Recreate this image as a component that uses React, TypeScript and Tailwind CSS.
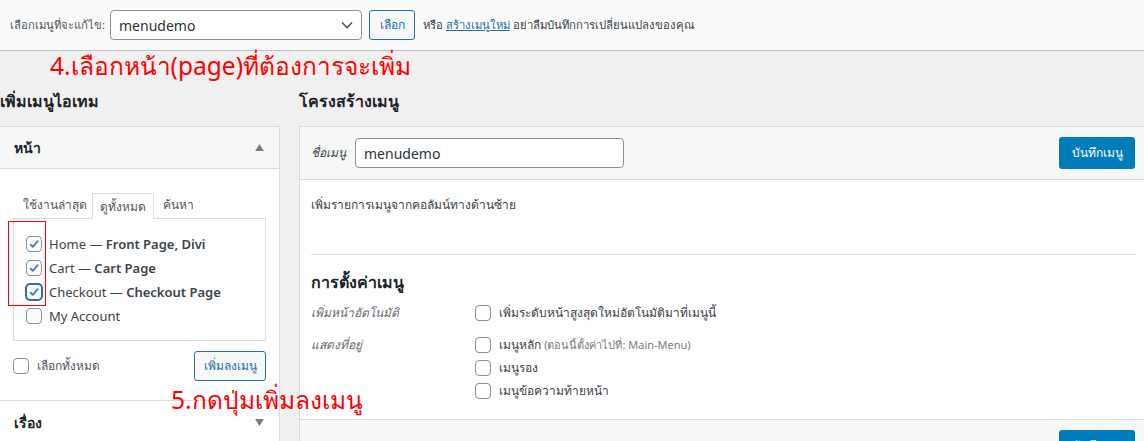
import React from 'react';

function Check({ checked = false, focus = false }: { checked?: boolean; focus?: boolean }) {
  return (
    <span
      className={`inline-flex h-4 w-4 shrink-0 items-center justify-center rounded-[4px] border bg-white ${
        focus ? 'border-[#2271b1] shadow-[0_0_0_1px_#2271b1]' : 'border-[#8c8f94]'
      }`}
    >
      {checked && (
        <svg viewBox="0 0 20 20" className="h-[18px] w-[18px]">
          <path d="M4.5 10.2 L8.3 14 L15.8 5.2" fill="none" stroke="#3582c4" strokeWidth="2.6" strokeLinejoin="round" />
        </svg>
      )}
    </span>
  );
}

function Triangle({ up = false }: { up?: boolean }) {
  return (
    <svg viewBox="0 0 10 8" className="h-[7px] w-[9px]">
      <path d={up ? 'M5 0 L10 8 L0 8 Z' : 'M0 0 L10 0 L5 8 Z'} fill="#787c82" />
    </svg>
  );
}

const pages = [
  { name: 'Home', state: 'Front Page, Divi' },
  { name: 'Cart', state: 'Cart Page' },
  { name: 'Checkout', state: 'Checkout Page', focus: true },
];

export default function App() {
  return (
    <div
      className="relative h-[441px] w-[1144px] overflow-hidden bg-[#f0f0f1] text-[13px] text-[#3c434a]"
      style={{ fontFamily: '"Noto Sans", "Liberation Sans", Tahoma, sans-serif' }}
    >
      {/* top bar */}
      <div className="flex h-[51px] items-center border-b border-[#c3c4c7] bg-[#fafafa] pl-[10px]">
        <span className="w-[92px] whitespace-nowrap text-[11.3px] text-[#50575e]">เลือกเมนูที่จะแก้ไข:</span>
        <div className="ml-[8px] flex h-[30px] w-[252px] items-center justify-between rounded-[4px] border border-[#8c8f94] bg-white pl-[8px] pr-[8px]">
          <span className="text-[14px] text-[#2c3338]">menudemo</span>
          <svg viewBox="0 0 12 8" className="h-[8px] w-[12px]">
            <path d="M1 1.5 L6 6.5 L11 1.5" fill="none" stroke="#50575e" strokeWidth="1.6" />
          </svg>
        </div>
        <button className="ml-[7px] h-[30px] w-[46px] rounded-[3px] border border-[#2271b1] bg-[#f6f7f7] text-[12px] text-[#2271b1]">
          เลือก
        </button>
        <span className="ml-[8px] text-[11.3px] text-[#3c434a]">
          หรือ <span className="text-[#2271b1] underline">สร้างเมนูใหม่</span> อย่าลืมบันทึกการเปลี่ยนแปลงของคุณ
        </span>
      </div>

      {/* columns */}
      <div className="flex gap-[19px]">
        {/* left column */}
        <div className="w-[280px] shrink-0">
          <div className="flex h-[75px] items-start pt-[38px]">
            <h2 className="text-[16px] font-semibold leading-[24px] text-[#1d2327]">เพิ่มเมนูไอเทม</h2>
          </div>
          <div className="border border-l-0 border-[#dcdcde] bg-white">
            <div className="flex h-[42px] items-center justify-between border-b border-[#dcdcde] bg-[#f6f7f7] pl-[14px] pr-[15px]">
              <span className="text-[14px] font-semibold text-[#1d2327]">หน้า</span>
              <Triangle up />
            </div>
            <div className="px-[13px] pb-[19px] pt-[24px]">
              <div className="flex items-end text-[12px] text-[#50575e]">
                <span className="pb-[4px] pl-[10px] pr-[5px]">ใช้งานล่าสุด</span>
                <span className="relative -mb-px h-[26px] border border-b-0 border-[#dcdcde] bg-white px-[7px] pt-[4px]">ดูทั้งหมด</span>
                <span className="px-[9px] pb-[4px]">ค้นหา</span>
              </div>
              <div className="flex h-[123px] flex-col gap-[8px] border border-[#dcdcde] bg-white pl-[12px] pt-[17px]">
                {pages.map((p) => (
                  <label key={p.name} className="flex h-[16px] items-center gap-[7px] leading-none">
                    <Check checked focus={p.focus} />
                    <span className="text-[13px]">
                      {p.name} — <span className="font-semibold">{p.state}</span>
                    </span>
                  </label>
                ))}
                <label className="flex h-[16px] items-center gap-[7px] leading-none">
                  <Check />
                  <span className="text-[13px]">My Account</span>
                </label>
              </div>
              <div className="mt-[10px] flex items-center justify-between">
                <label className="flex items-center gap-[8px]">
                  <Check />
                  <span className="text-[12px] text-[#50575e]">เลือกทั้งหมด</span>
                </label>
                <button className="h-[30px] w-[72px] rounded-[3px] border border-[#2271b1] bg-[#f6f7f7] text-[12px] text-[#2271b1]">
                  เพิ่มลงเมนู
                </button>
              </div>
            </div>
            <div className="flex h-[44px] items-center justify-between border-t border-[#dcdcde] pl-[14px] pr-[15px]">
              <span className="text-[14px] font-semibold text-[#1d2327]">เรื่อง</span>
              <Triangle />
            </div>
          </div>
        </div>

        {/* right column */}
        <div className="flex-1">
          <div className="flex h-[75px] items-start pt-[38px]">
            <h2 className="text-[16px] font-semibold leading-[24px] text-[#1d2327]">โครงสร้างเมนู</h2>
          </div>
          <div className="-mr-[10px] border border-[#dcdcde] bg-white">
            <div className="flex h-[53px] items-center justify-between border-b border-[#dcdcde] bg-[#f6f7f7] pl-[11px] pr-[18px]">
              <div className="flex items-center gap-[9px]">
                <span className="text-[12px] italic text-[#3c434a]">ชื่อเมนู</span>
                <div className="flex h-[30px] w-[269px] items-center rounded-[4px] border border-[#8c8f94] bg-white pl-[8px] text-[14px] text-[#2c3338]">
                  menudemo
                </div>
              </div>
              <button className="h-[32px] w-[76px] rounded-[3px] bg-[#007cba] text-[12px] text-white">บันทึกเมนู</button>
            </div>
            <div className="pl-[11px] pr-[18px]">
              <p className="pt-[16px] text-[12px] leading-[18px] text-[#3c434a]">เพิ่มรายการเมนูจากคอลัมน์ทางด้านซ้าย</p>
              <div className="mt-[40px] border-t border-[#dcdcde]" />
              <h3 className="pt-[16px] text-[16px] font-semibold leading-[22px] text-[#1d2327]">การตั้งค่าเมนู</h3>
              <div className="mt-[11px] flex">
                <span className="w-[164px] text-[12px] italic text-[#646970]">เพิ่มหน้าอัตโนมัติ</span>
                <label className="flex items-center gap-[8px]">
                  <Check />
                  <span className="text-[12px]">เพิ่มระดับหน้าสูงสุดใหม่อัตโนมัติมาที่เมนูนี้</span>
                </label>
              </div>
              <div className="mt-[14px] flex">
                <span className="w-[164px] text-[12px] italic text-[#646970]">แสดงที่อยู่</span>
                <div className="flex flex-col gap-[5px]">
                  <label className="flex items-center gap-[8px]">
                    <Check />
                    <span className="text-[12px]">
                      เมนูหลัก <span className="text-[11px] text-[#787c82]">(ตอนนี้ตั้งค่าไปที่: Main-Menu)</span>
                    </span>
                  </label>
                  <label className="flex items-center gap-[8px]">
                    <Check />
                    <span className="text-[12px]">เมนูรอง</span>
                  </label>
                  <label className="flex items-center gap-[8px]">
                    <Check />
                    <span className="text-[12px]">เมนูข้อความท้ายหน้า</span>
                  </label>
                </div>
              </div>
              <div className="h-[19px]" />
            </div>
            <div className="flex h-[60px] justify-end border-t border-[#dcdcde] bg-[#f6f7f7] pr-[18px] pt-[10px]">
              <button className="h-[32px] w-[76px] rounded-[3px] bg-[#007cba] text-[12px] text-white">บันทึกเมนู</button>
            </div>
          </div>
        </div>
      </div>

      {/* annotations */}
      <div className="absolute left-[50px] top-[49px] text-[24.5px] leading-[34px] text-[#ff0000]">4.เลือกหน้า(page)ที่ต้องการจะเพิ่ม</div>
      <div className="absolute left-[171px] top-[383px] text-[24.5px] leading-[34px] text-[#ff0000]">5.กดปุ่มเพิ่มลงเมนู</div>
      <div className="absolute left-[8px] top-[221px] h-[85px] w-[38px] border border-[#ff0000]" />
    </div>
  );
}
